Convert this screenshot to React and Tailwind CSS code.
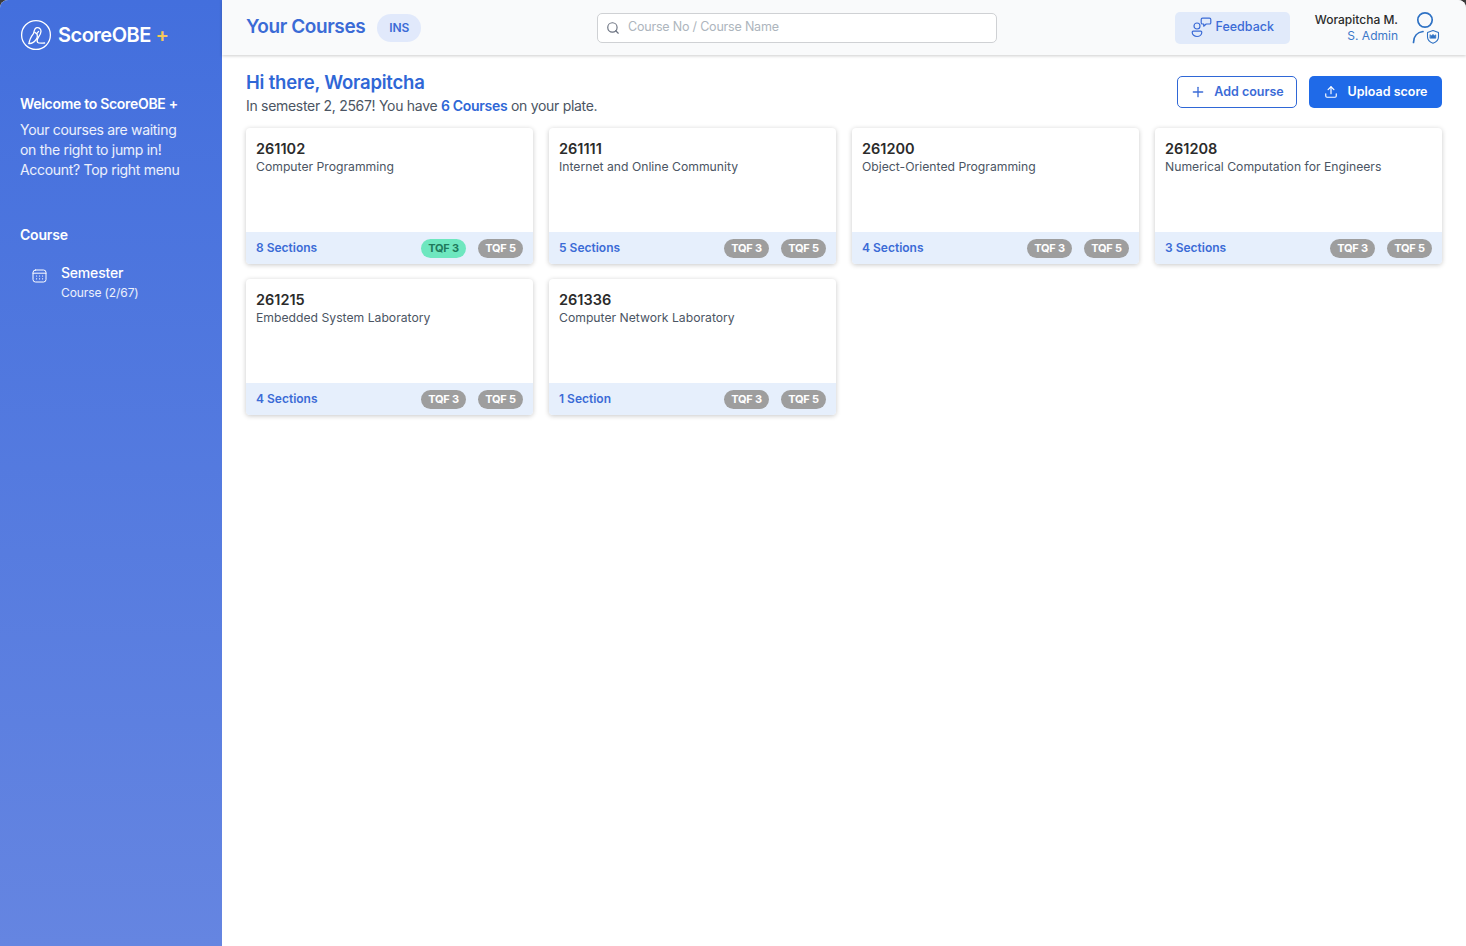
import { Plus, Search, Upload } from 'lucide-react'

const courses = [
  { no: '261102', name: 'Computer Programming', sections: '8 Sections', tqf3: true },
  { no: '261111', name: 'Internet and Online Community', sections: '5 Sections' },
  { no: '261200', name: 'Object-Oriented Programming', sections: '4 Sections' },
  { no: '261208', name: 'Numerical Computation for Engineers', sections: '3 Sections' },
  { no: '261215', name: 'Embedded System Laboratory', sections: '4 Sections' },
  { no: '261336', name: 'Computer Network Laboratory', sections: '1 Section' },
]

function Logo() {
  return (
    <svg width="32" height="32" viewBox="0 0 32 32" fill="none" stroke="currentColor" strokeWidth="1.3" strokeLinecap="round" strokeLinejoin="round">
      <circle cx="16" cy="16" r="14.4" />
      <path d="M9 24.5c.4-4.2 2.6-7.6 4.6-10.2.6-2.6.8-5 3.2-5.6 2.4-.5 4.2 1.300 4.200 3.600 0 2.500-1.400 4.400-2.800 6.400-1.200 1.700-1.400 3.500-.6 4.700.6.900 3.600.9 7 .6" />
      <path d="M9 24.500c2.600.2 5.600-1.700 7.400-4.400 1-1.500 1.200-3.100.8-4.600" />
      <path d="M14.800 13.200l1.800 1.600 2-2.400" />
    </svg>
  )
}

function CalendarIcon() {
  return (
    <svg width="15" height="15" viewBox="0 0 15 15" fill="none" stroke="currentColor" strokeWidth="1" strokeLinecap="round">
      <rect x="1" y="2" width="13" height="12" rx="2.500" />
      <path d="M1 5.200h13" />
      <path d="M4.500 8h.1M7.500 8h.1M10.500 8h.1M4.500 10.800h.1M7.500 10.800h.1M10.500 10.800h.1" strokeWidth="1.200" />
    </svg>
  )
}

function FeedbackIcon() {
  return (
    <svg width="21" height="21" viewBox="0 0 21 21" fill="none" stroke="currentColor" strokeWidth="1.200" strokeLinecap="round" strokeLinejoin="round">
      <circle cx="6" cy="9" r="3" />
      <path d="M1.200 15.200c0-.6.400-1 1-1h7.600c.6 0 1 .4 1 1 0 2.600-2.200 4.300-4.800 4.300s-4.800-1.700-4.800-4.300z" />
      <path d="M11.500 1.200h7c.7 0 1.300.6 1.300 1.300v3.200c0 .7-.6 1.300-1.300 1.300h-3.300l-2.500 2.200V7h-1.200c-.7 0-1.300-.6-1.300-1.300V2.500c0-.7.600-1.300 1.300-1.300z" />
    </svg>
  )
}

function AdminIcon() {
  return (
    <svg width="28" height="34" viewBox="0 0 28 34" fill="none" stroke="currentColor" strokeLinecap="round" strokeLinejoin="round">
      <circle cx="13" cy="9" r="7.200" strokeWidth="1.700" />
      <path d="M1.500 31.500c0-6 3.700-10.300 9.500-11" strokeWidth="1.700" />
      <path d="M21 19.500l5.500 2v4.200c0 3.300-2.300 5.400-5.500 6.600-3.200-1.200-5.500-3.300-5.500-6.600v-4.200z" strokeWidth="1.100" />
      <path d="M18.200 23.800l1.500 1 1.300-1.500 1.300 1.500 1.500-1v3.400h-5.600z" fill="currentColor" strokeWidth="0.600" />
    </svg>
  )
}

function Badge({ label, active }) {
  return (
    <span className={`flex h-[19px] w-[45px] items-center justify-center rounded-full text-[11px] font-bold tracking-[-0.2px] ${active ? 'bg-[#6ee7bf] text-[#1f7a5c]' : 'bg-[#9e9e9e] text-white'}`}>
      {label}
    </span>
  )
}

function CourseCard({ course }) {
  return (
    <div className="flex h-[136px] flex-col overflow-hidden rounded-[4px] bg-white shadow-[0_1px_5px_rgba(0,0,0,0.22)]">
      <div className="flex-1 px-[10px] pt-[11px]">
        <div className="text-[14.500px] leading-[19px] font-semibold text-[#2b2b2b]">{course.no}</div>
        <div className="text-[12.200px] leading-[17px] text-[#4b5563]">{course.name}</div>
      </div>
      <div className="flex h-[32px] items-center justify-between bg-[#e6effc] pr-[10px] pl-[10px]">
        <span className="text-[12px] font-semibold text-[#3b6bd6]">{course.sections}</span>
        <div className="flex gap-3">
          <Badge label="TQF 3" active={course.tqf3} />
          <Badge label="TQF 5" />
        </div>
      </div>
    </div>
  )
}

export default function App() {
  return (
    <div className="h-[946px] w-[1466px] overflow-hidden bg-[#3a3a3a] font-['Inter',sans-serif]">
      <div className="flex h-full overflow-hidden rounded-t-[8px] bg-white">
        {/* Sidebar */}
        <aside className="flex w-[222px] shrink-0 flex-col bg-gradient-to-b from-[#436fdd] to-[#6585e1] px-5 text-white">
          <div className="flex h-[70px] items-center gap-[6px]">
            <Logo />
            <span className="text-[20px] font-semibold tracking-[-0.5px]">
              ScoreOBE <span className="text-[#f5c85a]">+</span>
            </span>
          </div>
          <div className="mt-[24px] text-[14px] font-semibold leading-[20px] tracking-[-0.3px]">Welcome to ScoreOBE +</div>
          <p className="mt-[6px] text-[14px] leading-[20px] tracking-[-0.3px] text-white/90">
            Your courses are waiting
            <br />
            on the right to jump in!
            <br />
            Account? Top right menu
          </p>
          <div className="mt-[45px] text-[14px] font-semibold leading-[20px] tracking-[-0.2px]">Course</div>
          <div className="mt-[18px] ml-[12px] flex gap-[14px]">
            <div className="mt-[5px]">
              <CalendarIcon />
            </div>
            <div>
              <div className="text-[14px] font-medium leading-[20px] tracking-[-0.2px]">Semester</div>
              <div className="text-[12px] leading-[20px] tracking-[-0.1px] text-white/90">Course (2/67)</div>
            </div>
          </div>
        </aside>

        <div className="flex min-w-0 flex-1 flex-col">
          {/* Top bar */}
          <header className="flex h-[55px] shrink-0 items-center justify-between bg-[#f9fafb] pr-[26px] pl-[24px] shadow-[0_1px_3px_rgba(0,0,0,0.2)]">
            <div className="flex w-[351px] items-center gap-3">
              <span className="text-[19px] font-semibold tracking-[-0.4px] text-[#3b6bd6]">Your Courses</span>
              <span className="flex h-[28px] w-[44px] items-center justify-center rounded-full bg-[#e1e9fb] text-[12px] font-semibold text-[#3b6bd6]">INS</span>
            </div>
            <div className="flex h-[30px] w-[400px] items-center gap-2 rounded-[5px] border border-[#cfd1d4] bg-white px-2">
              <Search size={14} className="text-[#6b7280]" />
              <span className="text-[12.500px] tracking-[-0.2px] text-[#adb5bd]">Course No / Course Name</span>
            </div>
            <div className="ml-auto flex items-center">
              <button className="flex h-[32px] w-[115px] items-center justify-center gap-[4px] rounded-[5px] bg-[#e1eafa] text-[12.500px] font-medium text-[#3b6bd6]">
                <FeedbackIcon />
                Feedback
              </button>
              <div className="ml-[25px] text-right">
                <div className="text-[12px] font-medium leading-[16px] text-[#2b2b2b]">Worapitcha M.</div>
                <div className="text-[12px] leading-[16px] text-[#3b78c9]">S. Admin</div>
              </div>
              <div className="ml-[14px] text-[#2f72c4]">
                <AdminIcon />
              </div>
            </div>
          </header>

          <main className="flex-1 px-[24px]">
            <div className="flex items-start justify-between pt-[15px]">
              <div>
                <h1 className="text-[18.500px] leading-[24px] font-semibold tracking-[-0.2px] text-[#2f67d6]">Hi there, Worapitcha</h1>
                <p className="mt-[2px] text-[14px] leading-[20px] tracking-[-0.3px] text-[#4b5563]">
                  In semester 2, 2567! You have <span className="font-semibold text-[#2f67d6]">6 Courses</span> on your plate.
                </p>
              </div>
              <div className="mt-[6px] flex gap-3">
                <button className="flex h-[32px] w-[120px] items-center justify-center gap-[8px] rounded-[5px] border border-[#2f67d6] bg-white text-[12.500px] font-semibold text-[#3b6bd6]">
                  <Plus size={16} />
                  Add course
                </button>
                <button className="flex h-[32px] w-[133px] items-center justify-center gap-[10px] rounded-[5px] bg-[#1f6ae8] text-[12.500px] font-semibold text-white">
                  <Upload size={14} />
                  Upload score
                </button>
              </div>
            </div>
            <div className="mt-[12px] grid grid-cols-4 gap-x-4 gap-y-[15px]">
              {courses.map((course) => (
                <CourseCard key={course.no} course={course} />
              ))}
            </div>
          </main>
        </div>
      </div>
    </div>
  )
}
